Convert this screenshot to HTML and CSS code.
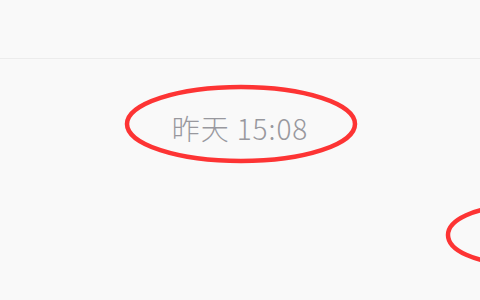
FILE: index.html
```
<!DOCTYPE html>
<html lang="zh-CN">
<head>
  <meta charset="UTF-8" />
  <meta name="viewport" content="width=device-width, initial-scale=1.0"/>
  <title>聊天</title>
  <link rel="stylesheet" href="styles.css">
</head>
<body>

  <div class="header"></div>

  <div class="chat">
    <div class="time">昨天 15:08</div>
  </div>

  <!-- red marks drawn over the screenshot -->
  <svg class="marks" width="480" height="300" viewBox="0 0 480 300">
    <ellipse cx="241" cy="124" rx="114" ry="37" />
    <ellipse cx="510" cy="235" rx="62" ry="28" />
  </svg>

</body>
</html>
```

FILE: styles.css
```
* {
  box-sizing: border-box;
}

body {
  margin: 0;
  width: 480px;
  height: 300px;
  overflow: hidden;
  position: relative;
  font-family: "Noto Sans CJK SC", "Noto Sans", sans-serif;
  background-color: #f9f9f9;
  color: #333;
}

.header {
  height: 59px;
  border-bottom: 1px solid #ececec;
  background: #f9f9f9;
}

.chat {
  padding-top: 54px;
}

.time {
  text-align: center;
  font-size: 28px;
  font-weight: 300;
  letter-spacing: 0.9px;
  line-height: 30px;
  color: #98989e;
}

.marks {
  position: absolute;
  top: 0;
  left: 0;
}

.marks ellipse {
  fill: none;
  stroke: #fd3434;
  stroke-width: 4.5;
}
```
